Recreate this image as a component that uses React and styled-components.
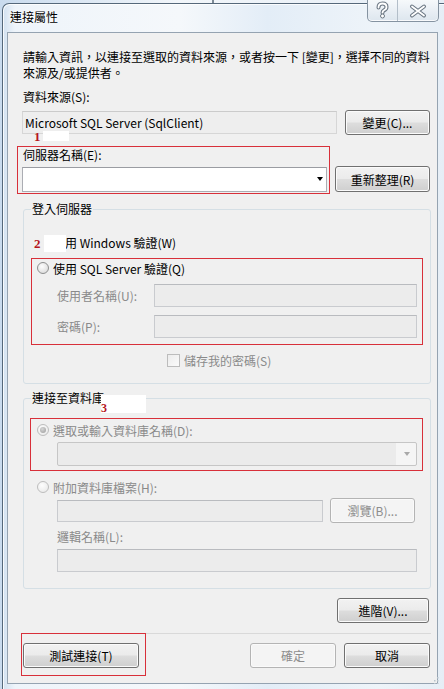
import React from "react";
import styled, { createGlobalStyle, css } from "styled-components";

const GlobalStyle = createGlobalStyle`
  html, body { margin: 0; padding: 0; }
  body {
    font-family: "Noto Sans CJK TC", "Noto Sans", sans-serif;
    font-size: 12px;
    color: #000;
  }
  * { box-sizing: border-box; }
`;

const Page = styled.div`
  width: 444px;
  height: 689px;
  overflow: hidden;
  padding: 3px 0 0 2px;
  background:
    linear-gradient(to right, transparent 212px, #7d8a96 212px, #7d8a96 214px, transparent 214px),
    linear-gradient(to right, #c9dbee, #f2f6fa 40%, #e6eef6);
`;

const Window = styled.div`
  width: 442px;
  height: 700px;
  border: 1px solid #55687a;
  border-right: none;
  border-bottom: none;
  border-top-left-radius: 7px;
  background: linear-gradient(to right, #d3e2f1 0px, #eef4fa 12px, #f5f8fb 40%, #e3edf7 60%, #eef4f9 85%, #e6eef6);
  box-shadow: inset 1px 1px 0 rgba(255, 255, 255, 0.8);
`;

const TitleBar = styled.div`
  display: flex;
  align-items: flex-start;
  height: 28px;
  padding-left: 7px;
`;

const Title = styled.div`
  padding-top: 5px;
  line-height: 16px;
  text-shadow: 0 0 6px #fff, 0 0 3px #fff;
`;

const CaptionGroup = styled.div`
  display: flex;
  margin: -4px 5px 0 auto;
  height: 22px;
  border: 1px solid #8593a1;
  border-top: none;
  border-radius: 0 0 5px 5px;
  background: linear-gradient(#f6f9fb, #e8eef4 55%, #dde6ee);
  box-shadow: inset 0 -1px 0 rgba(255, 255, 255, 0.8);
`;

const CaptionButton = styled.div`
  width: ${(p) => p.$w}px;
  height: 21px;
  display: flex;
  align-items: center;
  justify-content: center;
  & + & {
    border-left: 1px solid #b3bec9;
  }
`;

const Client = styled.div`
  position: relative;
  display: flex;
  flex-direction: column;
  width: 431px;
  height: 652px;
  margin-left: 4px;
  padding: 16px 7px 0 15px;
  border: 1px solid #95a3b1;
  background: #f0f0f0;
`;

const Intro = styled.p`
  margin: 0;
  line-height: 16px;
`;

const Label = styled.div`
  line-height: 16px;
  margin-top: ${(p) => p.$mt || 0}px;
  padding-left: ${(p) => p.$indent || 0}px;
  color: ${(p) => (p.$disabled ? "#8a8a8a" : "#000")};
  white-space: nowrap;
`;

const Row = styled.div`
  display: flex;
  align-items: center;
  height: ${(p) => p.$h}px;
  margin-top: ${(p) => p.$mt || 0}px;
  padding-left: ${(p) => p.$indent || 0}px;
  gap: ${(p) => p.$gap || 0}px;
`;

const Field = styled.div`
  width: ${(p) => p.$w}px;
  height: ${(p) => p.$h}px;
  margin-left: ${(p) => p.$ml || 0}px;
  padding-left: 2px;
  line-height: ${(p) => p.$h - 2}px;
  white-space: nowrap;
  border: 1px solid #c9cbcf;
  border-top-color: #b9bbbf;
  background: #ececec;
  ${(p) =>
    p.$readonly &&
    css`
      background: #eeeeee;
      border-color: #d6d6d6;
      border-top-color: #cbcbcb;
    `}
`;

const Button = styled.button`
  width: ${(p) => p.$w}px;
  height: ${(p) => p.$h || 25}px;
  margin-left: ${(p) => p.$ml || "0px"};
  margin-right: ${(p) => p.$mr || 0}px;
  padding: 0;
  font: inherit;
  color: #000;
  border: 1px solid #707070;
  border-radius: 3px;
  background: linear-gradient(#f2f2f2 0%, #ebebeb 48%, #dddddd 52%, #cfcfcf 100%);
  box-shadow: inset 0 0 0 1px #fbfbfb;
  flex: none;
  &:disabled {
    color: #8d8d8d;
    border-color: #b4b4b4;
    background: #f4f4f4;
    box-shadow: inset 0 0 0 1px #fafafa;
  }
`;

const Combo = styled.div`
  position: relative;
  flex: none;
  width: ${(p) => p.$w}px;
  height: ${(p) => p.$h}px;
  margin-left: ${(p) => p.$ml || 0}px;
  border: 1px solid #abadb3;
  border-top-color: #9a9ca2;
  background: #fff;
  ${(p) =>
    p.$disabled &&
    css`
      border-color: #c6c6c6;
      border-radius: 2px;
      background: linear-gradient(to right, #ebebeb calc(100% - 20px), #f5f5f5 calc(100% - 20px));
    `}
`;

const Arrow = styled.span`
  position: absolute;
  right: ${(p) => p.$right}px;
  top: 50%;
  margin-top: -2px;
  width: 0;
  height: 0;
  border-left: 3.5px solid transparent;
  border-right: 3.5px solid transparent;
  border-top: 4px solid ${(p) => (p.$disabled ? "#a9a9a9" : "#000")};
`;

const Group = styled.fieldset`
  margin: ${(p) => p.$mt}px 0 0 0;
  width: 408px;
  min-width: 0;
  padding: 0 13px ${(p) => p.$pb}px 13px;
  border: 1px solid #d5dfe5;
  border-radius: 3px;
`;

const Legend = styled.legend`
  margin-left: -6px;
  padding: 0 1px;
  line-height: 16px;
`;

const Radio = styled.span`
  flex: none;
  width: 12px;
  height: 12px;
  margin-right: 4px;
  border-radius: 50%;
  border: 1px solid ${(p) => (p.$disabled ? "#bdbdbd" : "#8e8f8f")};
  background: ${(p) =>
    p.$disabled
      ? "radial-gradient(circle at 40% 35%, #fdfdfd, #e6e6e6)"
      : "radial-gradient(circle at 40% 35%, #fdfdfd, #d4d4d4)"};
  display: flex;
  align-items: center;
  justify-content: center;
  &::after {
    content: "";
    display: ${(p) => (p.$checked ? "block" : "none")};
    width: 6px;
    height: 6px;
    border-radius: 50%;
    background: radial-gradient(circle at 40% 35%, #d6d6d6, #9a9a9a);
  }
`;

const CheckBox = styled.span`
  flex: none;
  width: 13px;
  height: 13px;
  margin-right: 4px;
  border: 1px solid #bcbcbc;
  background: linear-gradient(135deg, #ececec, #fafafa);
`;

const LabelCell = styled.span`
  width: ${(p) => (p.$w ? `${p.$w}px` : "auto")};
  color: #8a8a8a;
  white-space: nowrap;
`;

const Separator = styled.div`
  height: 1px;
  margin: 10px 0 0 -1px;
  width: 409px;
  background: #d9d9d9;
`;

const ButtonBar = styled.div`
  display: flex;
  margin-top: 9px;
`;

const RedBox = styled.svg`
  position: absolute;
  z-index: 3;
  left: ${(p) => p.$x}px;
  top: ${(p) => p.$y}px;
  overflow: visible;
  pointer-events: none;
`;

const Patch = styled.div`
  position: absolute;
  left: ${(p) => p.$x}px;
  top: ${(p) => p.$y}px;
  width: ${(p) => p.$w}px;
  height: ${(p) => p.$h}px;
  background: ${(p) => p.$bg || "#fff"};
`;

const Mark = styled.span`
  position: absolute;
  left: ${(p) => p.$x}px;
  top: ${(p) => p.$y}px;
  font-family: "Liberation Serif", serif;
  font-weight: bold;
  font-size: ${(p) => p.$size || 13}px;
  line-height: 1;
  color: #b5161c;
`;

const Grip = styled.svg`
  position: absolute;
  right: -3px;
  bottom: -1px;
`;

function Frame({ x, y, w, h }) {
  return (
    <RedBox $x={x} $y={y} width={w} height={h}>
      <rect x="0.5" y="0.5" width={w - 1} height={h - 1} fill="none" stroke="#d8303a" strokeWidth="1" />
    </RedBox>
  );
}

function HelpGlyph() {
  const d = "M8.5 7.5 Q8.5 3.5 12.5 3.5 Q16.5 3.5 16.5 7 Q16.5 9.2 14 10.3 Q12.5 11 12.5 12.8";
  return (
    <svg width="25" height="21" viewBox="0 0 25 21">
      <path d={d} fill="none" stroke="#6b7783" strokeWidth="4" strokeLinecap="round" />
      <path d={d} fill="none" stroke="#fff" strokeWidth="1.8" strokeLinecap="round" />
      <circle cx="12.5" cy="16" r="2" fill="#fff" stroke="#6b7783" strokeWidth="1" />
    </svg>
  );
}

function CloseGlyph() {
  const d = "M14 6.5 L26 15.5 M26 6.5 L14 15.5";
  return (
    <svg width="40" height="21" viewBox="0 0 40 21">
      <path d={d} fill="none" stroke="#6b7783" strokeWidth="4" strokeLinecap="round" />
      <path d={d} fill="none" stroke="#fff" strokeWidth="1.8" strokeLinecap="round" />
    </svg>
  );
}

export default function App() {
  return (
    <>
      <GlobalStyle />
      <Page>
        <Window>
          <TitleBar>
            <Title>連接屬性</Title>
            <CaptionGroup>
              <CaptionButton $w={29}>
                <HelpGlyph />
              </CaptionButton>
              <CaptionButton $w={41}>
                <CloseGlyph />
              </CaptionButton>
            </CaptionGroup>
          </TitleBar>

          <Client>
            <Intro>
              請輸入資訊，以連接至選取的資料來源，或者按一下 [變更]，選擇不同的資料
              <br />
              來源及/或提供者。
            </Intro>

            <Label $mt={8}>資料來源(S):</Label>
            <Row $h={25} $mt={5}>
              <Field $w={315} $h={23} $ml={-1} $readonly>
                Microsoft SQL Server (SqlClient)
              </Field>
              <Button $w={85} $ml="auto">變更(C)...</Button>
            </Row>

            <Label $mt={12}>伺服器名稱(E):</Label>
            <Row $h={26} $mt={3}>
              <Combo $w={305} $h={25} $ml={-1}>
                <Arrow $right={3} />
              </Combo>
              <Button $w={95} $h={26} $ml="auto">重新整理(R)</Button>
            </Row>

            <Group $mt={9} $pb={15}>
              <Legend>登入伺服器</Legend>
              <Row $h={16} $mt={17}>
                <Radio />
                使用 Windows 驗證(W)
              </Row>
              <Row $h={16} $mt={10}>
                <Radio />
                使用 SQL Server 驗證(Q)
              </Row>
              <Row $h={23} $mt={8} $indent={20}>
                <LabelCell $w={97}>使用者名稱(U):</LabelCell>
                <Field $w={263} $h={23} />
              </Row>
              <Row $h={23} $mt={8} $indent={20}>
                <LabelCell $w={97}>密碼(P):</LabelCell>
                <Field $w={263} $h={23} />
              </Row>
              <Row $h={16} $mt={14} $indent={130}>
                <CheckBox />
                <LabelCell>儲存我的密碼(S)</LabelCell>
              </Row>
            </Group>

            <Group $mt={6} $pb={16}>
              <Legend>連接至資料庫</Legend>
              <Row $h={16} $mt={16}>
                <Radio $checked $disabled />
                <LabelCell>選取或輸入資料庫名稱(D):</LabelCell>
              </Row>
              <Row $h={24} $mt={4} $indent={20}>
                <Combo $w={360} $h={24} $disabled>
                  <Arrow $right={6} $disabled />
                </Combo>
              </Row>
              <Row $h={16} $mt={13}>
                <Radio $disabled />
                <LabelCell>附加資料庫檔案(H):</LabelCell>
              </Row>
              <Row $h={25} $mt={3} $indent={20} $gap={7}>
                <Field $w={266} $h={22} />
                <Button $w={85} disabled>瀏覽(B)...</Button>
              </Row>
              <Label $mt={6} $indent={20} $disabled>邏輯名稱(L):</Label>
              <Row $h={23} $mt={4} $indent={20}>
                <Field $w={360} $h={23} />
              </Row>
            </Group>

            <Row $h={25} $mt={9}>
              <Button $w={92} $ml="auto" $mr={1}>進階(V)...</Button>
            </Row>
            <Separator />
            <ButtonBar>
              <Button $w={116}>測試連接(T)</Button>
              <Button $w={86} $ml="auto" disabled>確定</Button>
              <Button $w={86} $ml="8px">取消</Button>
            </ButtonBar>

            <Frame x={9} y={113} w={313} h={48} />
            <Patch $x={35} $y={98} $w={26} $h={10} />
            <Mark $x={26} $y={97}>1</Mark>

            <Patch $x={25} $y={201} $w={11} $h={17} $bg="#f0f0f0" />
            <Patch $x={36} $y={202} $w={22} $h={17} />
            <Mark $x={26} $y={204}>2</Mark>
            <Frame x={23} y={225} w={392} h={87} />

            <Patch $x={93} $y={362} $w={45} $h={18} />
            <Mark $x={93} $y={369} $size={12}>3</Mark>
            <Frame x={22} y={385} w={393} h={53} />

            <Frame x={13} y={600} w={125} h={43} />

            <Grip width="8" height="8" viewBox="0 0 8 8">
              <rect x="5" y="1" width="1.5" height="1.5" fill="#b8c3cc" />
              <rect x="5" y="4" width="1.5" height="1.5" fill="#b8c3cc" />
              <rect x="2" y="4" width="1.5" height="1.5" fill="#b8c3cc" />
              <rect x="5" y="7" width="1.5" height="1.5" fill="#b8c3cc" />
              <rect x="2" y="7" width="1.5" height="1.5" fill="#b8c3cc" />
            </Grip>
          </Client>
        </Window>
      </Page>
    </>
  );
}
